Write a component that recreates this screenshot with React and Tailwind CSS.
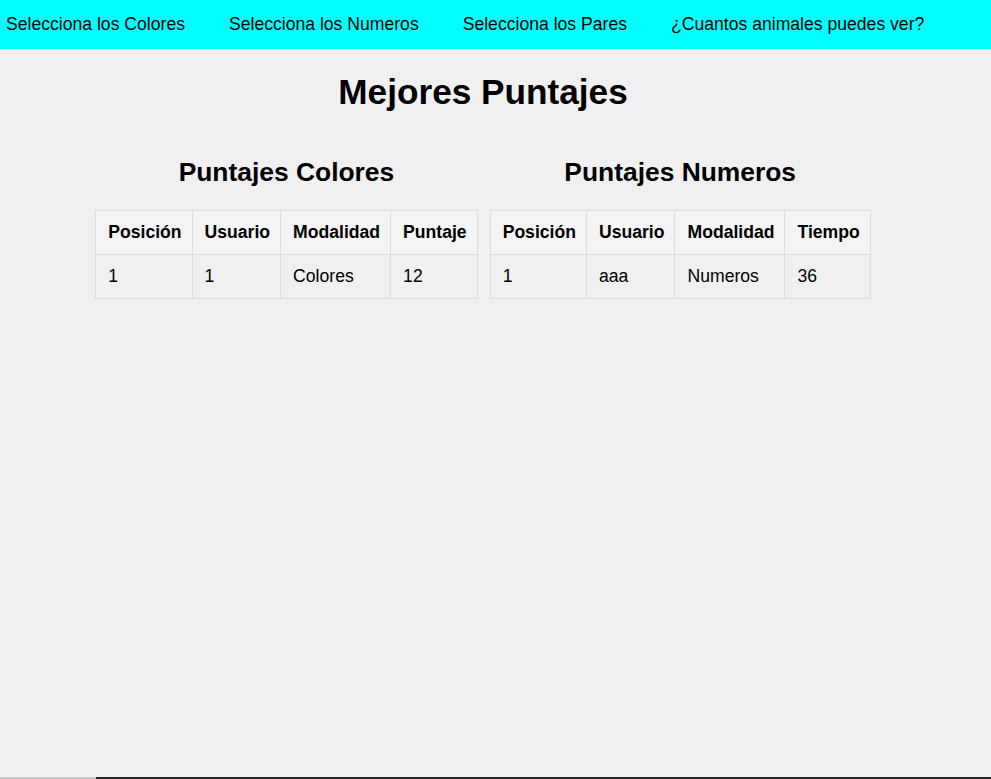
import React from "react";

const navLinks = [
  "Selecciona los Colores",
  "Selecciona los Numeros",
  "Selecciona los Pares",
  "¿Cuantos animales puedes ver?",
];

const tables = [
  {
    title: "Puntajes Colores",
    cols: ["Posición", "Usuario", "Modalidad", "Puntaje"],
    rows: [["1", "1", "Colores", "12"]],
  },
  {
    title: "Puntajes Numeros",
    cols: ["Posición", "Usuario", "Modalidad", "Tiempo"],
    rows: [["1", "aaa", "Numeros", "36"]],
  },
];

const ScoreTable = ({ title, cols, rows }) => (
  <div className="flex flex-col items-center">
    <h2 className="text-[26.4px] leading-[30px] font-bold mb-[23px]">{title}</h2>
    <table className="border-collapse text-[17.6px] leading-[21px]">
      <thead>
        <tr className="bg-[#f4f4f4]">
          {cols.map((c) => (
            <th
              key={c}
              className="border border-[#dddddd] pl-3 pr-[10px] py-[11px] text-left font-bold"
            >
              {c}
            </th>
          ))}
        </tr>
      </thead>
      <tbody>
        {rows.map((r, i) => (
          <tr key={i}>
            {r.map((cell, j) => (
              <td key={j} className="border border-[#dddddd] pl-3 pr-[10px] py-[11px]">
                {cell}
              </td>
            ))}
          </tr>
        ))}
      </tbody>
    </table>
  </div>
);

export default function App() {
  return (
    <div
      className="min-h-[779px] flex flex-col bg-[#f0f0f0] text-black"
      style={{ fontFamily: '"Liberation Sans", Arial, sans-serif' }}
    >
      <nav className="h-[49px] bg-[#00ffff] flex items-center gap-[44px] pl-[6px] text-[17.6px]">
        {navLinks.map((l) => (
          <a key={l} href="#" className="text-black">
            {l}
          </a>
        ))}
      </nav>

      <div className="w-[966px] flex flex-col items-center">
        <h1 className="text-[35.2px] leading-[40px] font-bold mt-[23px] mb-[45px]">
          Mejores Puntajes
        </h1>
        <div className="flex items-start gap-[12px]">
          {tables.map((t) => (
            <ScoreTable key={t.title} {...t} />
          ))}
        </div>
      </div>

      <div className="mt-auto flex h-[2px]">
        <div className="w-[96px] bg-[#c8c8c8]" />
        <div className="flex-1 bg-[#1f261f]" />
      </div>
    </div>
  );
}
